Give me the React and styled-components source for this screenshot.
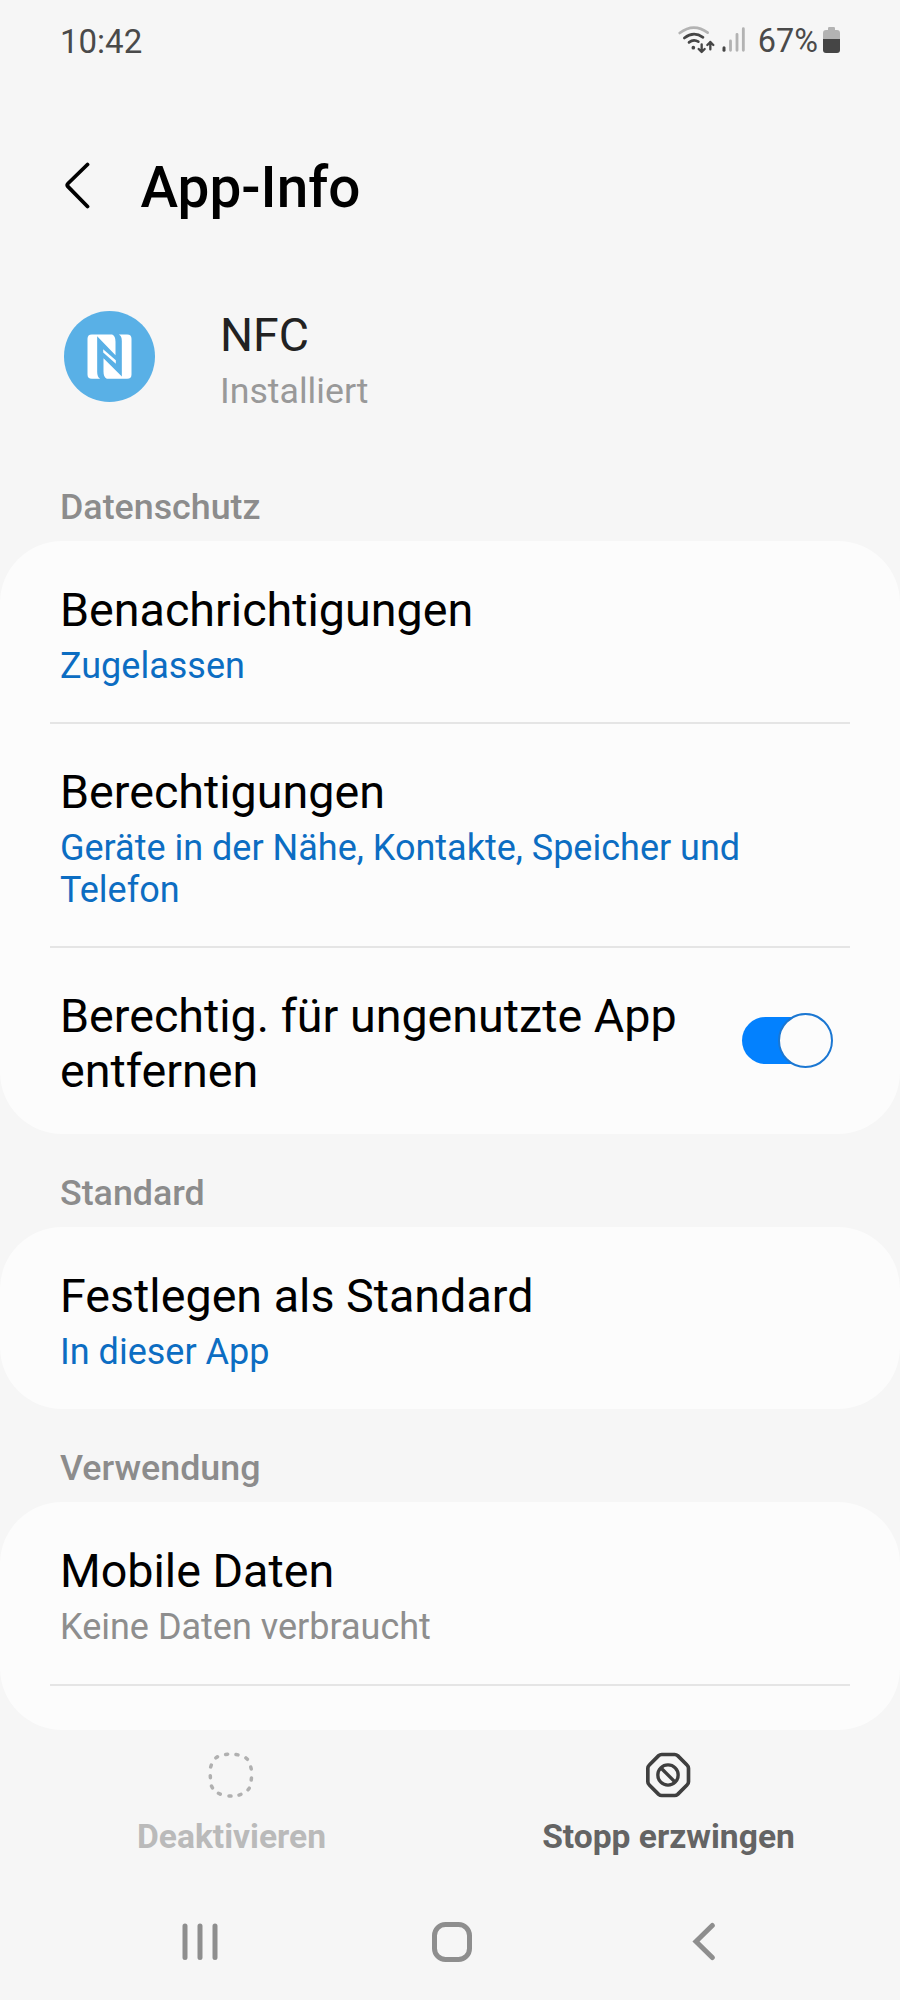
import React from "react";
import styled, { createGlobalStyle } from "styled-components";

const GlobalStyle = createGlobalStyle`
    * {
        box-sizing: border-box;
    }
    body {
        margin: 0;
        background: #f6f6f6;
        font-family: Roboto, "Liberation Sans", sans-serif;
    }
`;

const Screen = styled.div`
    width: 900px;
    height: 2000px;
    overflow: hidden;
    display: flex;
    flex-direction: column;
    background: #f6f6f6;
`;

const StatusBar = styled.div`
    height: 60px;
    padding: 22px 60px 0;
    display: flex;
    justify-content: space-between;
    align-items: flex-start;
    color: #4a4a4a;
    line-height: 38px;
`;

const Clock = styled.span`
    margin-top: 1px;
    font-size: 33px;
`;

const StatusIcons = styled.div`
    height: 36px;
    display: flex;
    align-items: center;
`;

const NetworkIcon = styled.svg`
    width: 80px;
    height: 50px;
    margin-right: 3px;
`;

const Percent = styled.span`
    padding-top: 2px;
    font-size: 32.4px;
    margin-right: 5px;
`;

const BatteryIcon = styled.svg`
    width: 17px;
    height: 26px;
`;

const Header = styled.header`
    padding: 94px 60px 0;
    display: flex;
    align-items: flex-start;
    gap: 50.5px;
`;

const BackIcon = styled.svg`
    width: 30px;
    height: 50px;
    margin-top: 6.5px;
`;

const Title = styled.h1`
    margin: 0;
    font-size: 56.7px;
    line-height: 67px;
    font-weight: 500;
    color: #000;
`;

const AppSummary = styled.div`
    height: 104px;
    margin-top: 86px;
    padding-left: 64px;
    display: flex;
    gap: 65px;
`;

const AppIcon = styled.svg`
    width: 91px;
    height: 91px;
    margin-top: 4px;
`;

const AppName = styled.div`
    margin-top: 1px;
    font-size: 46.4px;
    line-height: 55px;
    color: #222;
`;

const AppState = styled.div`
    margin-top: 6.5px;
    font-size: 35.7px;
    line-height: 42px;
    color: #999;
`;

const Sections = styled.main`
    height: 1318.5px;
    padding-top: 36.5px;
    flex: none;
`;

const SectionTitle = styled.h2`
    margin: 0;
    padding: 38px 60px 13.5px;
    font-size: 35.8px;
    line-height: 42px;
    font-weight: 500;
    color: #8c8c8c;
`;

const Card = styled.section`
    height: ${props => props.$height || "auto"};
    overflow: hidden;
    border-radius: 62px;
    background: #fcfcfc;
`;

const Row = styled.div`
    margin: 0 50px;
    padding: 40.4px 17.5px 35.4px 10px;
    display: flex;
    justify-content: space-between;
    align-items: center;
    &:first-child {
        padding-top: 42px;
    }
    &:not(:first-child) {
        border-top: 2px solid #e5e5e5;
    }
`;

const RowText = styled.div`
    max-width: ${props => props.$narrow ? "640px" : "730px"};
`;

const RowTitle = styled.div`
    font-size: 46.65px;
    line-height: 55px;
    color: #000;
`;

const RowValue = styled.div`
    margin-top: 7px;
    font-size: 36px;
    line-height: 42px;
    color: ${props => props.$muted ? "#8e8e8e" : "#0c6dc2"};
`;

const Switch = styled.div`
    width: 90.5px;
    height: 55px;
    margin-bottom: 6px;
    display: flex;
    align-items: center;
`;

const Track = styled.div`
    flex: none;
    width: 86px;
    height: 47px;
    border-radius: 24px;
    background: #0381fe;
`;

const Knob = styled.div`
    flex: none;
    width: 55px;
    height: 55px;
    margin-left: -50.5px;
    border: 2px solid #1b77d2;
    border-radius: 50%;
    background: #fcfcfc;
`;

const Actions = styled.div`
    padding: 22.5px 13px 0;
    display: grid;
    grid-template-columns: 1fr 1fr;
`;

const Action = styled.div`
    display: flex;
    flex-direction: column;
    align-items: center;
    gap: 19px;
    font-size: 33.6px;
    line-height: 40px;
    font-weight: 700;
    color: ${props => props.$disabled ? "#bababa" : "#646464"};
`;

const ActionIcon = styled.svg`
    width: 46px;
    height: 46px;
    margin-right: 1px;
`;

const NavBar = styled.nav`
    margin: 65px 0 0 74px;
    display: grid;
    grid-template-columns: repeat(3, 252px);
    justify-items: center;
`;

const NavIcon = styled.svg`
    width: 40px;
    height: 40px;
    fill: none;
    stroke: #8e8e8e;
    stroke-width: 5;
`;

const DOTS = [
    [380, 72], [411, 73], [440, 85], [453, 113], [454, 146], [446, 176], [420, 193],
    [390, 197], [358, 190], [336, 170], [331, 139], [333, 107], [350, 81]
];

// short dash at every dot, turned along the line between its neighbours
const dash = ([x, y], i) => {
    const [ax, ay] = DOTS[(i + DOTS.length - 1) % DOTS.length];
    const [bx, by] = DOTS[(i + 1) % DOTS.length];
    const len = Math.hypot(bx - ax, by - ay);
    const dx = (bx - ax) / len * 3;
    const dy = (by - ay) / len * 3;
    return `M${x - dx} ${y - dy}L${x + dx} ${y + dy}`;
};

const Network = () => (
    <NetworkIcon viewBox="0 0 240 150" fill="none" strokeLinecap="round" strokeLinejoin="round">
        <path d="M14 54Q56 22 98 53" stroke="#b3b3b3" strokeWidth="8"/>
        <g stroke="#454545" strokeWidth="8">
            <path d="M28 69Q56 47 84 67"/>
            <path d="M42 82Q56 71 70 80"/>
            <path d="M80 88V110M71 102L80 111L89 102" strokeWidth="7"/>
            <path d="M106 103V81M97 90L106 81L115 90" strokeWidth="7"/>
            <path d="M147 98V106" strokeWidth="9"/>
        </g>
        <circle cx="55" cy="98" r="5.5" fill="#454545"/>
        <path d="M166.5 78V106M186 58V106M205 41V106" stroke="#b3b3b3" strokeWidth="8.5"/>
    </NetworkIcon>
);

const Battery = () => (
    <BatteryIcon viewBox="0 0 17 26">
        <path d="M5 3V1.200Q5 0 6.200 0H10.800Q12 0 12 1.200V3H14Q17 3 17 6V12H0V6Q0 3 3 3Z" fill="#b3b3b3"/>
        <path d="M0 12H17V23Q17 26 14 26H3Q0 26 0 23Z" fill="#454545"/>
    </BatteryIcon>
);

const NfcLogo = () => (
    <AppIcon viewBox="73.500 63.500 273 273">
        <circle cx="210" cy="200" r="136.500" fill="#59b0e6"/>
        <g fill="#fff">
            <path d="M157 134H218Q228 138 228 156V196L173 139V246Q173 262 182 267H157Q144 267 144 254V147Q144 134 157 134Z"/>
            <path d="M263 267H202Q192 263 192 245V205L247 260V154Q247 138 238 134H263Q276 134 276 147V254Q276 267 263 267Z"/>
            <path d="M191 178L229 211V222L191 188Z"/>
        </g>
    </AppIcon>
);

const Toggle = () => (
    <Switch>
        <Track/>
        <Knob/>
    </Switch>
);

const Entry = ({title, value, muted, toggle}) => (
    <Row>
        <RowText $narrow={toggle}>
            <RowTitle>{title}</RowTitle>
            {value && <RowValue $muted={muted}>{value}</RowValue>}
        </RowText>
        {toggle && <Toggle/>}
    </Row>
);

const App = () => (
    <Screen>
        <GlobalStyle/>
        <StatusBar>
            <Clock>10:42</Clock>
            <StatusIcons>
                <Network/>
                <Percent>67%</Percent>
                <Battery/>
            </StatusIcons>
        </StatusBar>
        <Header>
            <BackIcon viewBox="0 0 30 50" fill="none" stroke="#000" strokeWidth="3.800" strokeLinecap="round" strokeLinejoin="round">
                <path d="M27.500 3.500L8 22.500Q6.500 24 8 25.700L27.500 45.500"/>
            </BackIcon>
            <Title>App-Info</Title>
        </Header>
        <AppSummary>
            <NfcLogo/>
            <div>
                <AppName>NFC</AppName>
                <AppState>Installiert</AppState>
            </div>
        </AppSummary>
        <Sections>
            <SectionTitle>Datenschutz</SectionTitle>
            <Card>
                <Entry title="Benachrichtigungen" value="Zugelassen"/>
                <Entry title="Berechtigungen" value="Geräte in der Nähe, Kontakte, Speicher und Telefon"/>
                <Entry title="Berechtig. für ungenutzte App entfernen" toggle/>
            </Card>
            <SectionTitle>Standard</SectionTitle>
            <Card>
                <Entry title="Festlegen als Standard" value="In dieser App"/>
            </Card>
            <SectionTitle>Verwendung</SectionTitle>
            <Card $height="227.5px">
                <Entry title="Mobile Daten" value="Keine Daten verbraucht" muted/>
                <Row/>
            </Card>
        </Sections>
        <Actions>
            <Action $disabled>
                <ActionIcon viewBox="324 65 138 138" fill="none" stroke="#b0b0b0" strokeWidth="10.500" strokeLinecap="round">
                    <path d={DOTS.map(dash).join("")}/>
                </ActionIcon>
                Deaktivieren
            </Action>
            <Action>
                <ActionIcon viewBox="376 156 138 138" fill="none" stroke="#3f3f3f" strokeWidth="11" strokeLinejoin="round">
                    <path d="M426 163.500H465Q470 163.500 474 167L502 195Q506.500 199 506.500 205V245Q506.500 251 502 255L474 283Q470 286.500 465 286.500H426Q421 286.500 417 283L389 255Q384.500 251 384.500 245V205Q384.500 199 389 195L417 167Q421 163.500 426 163.500Z"/>
                    <circle cx="445" cy="225" r="30.500" strokeWidth="10"/>
                    <path d="M424 204L466 246" strokeWidth="10"/>
                </ActionIcon>
                Stopp erzwingen
            </Action>
        </Actions>
        <NavBar>
            <NavIcon viewBox="0 0 40 40" strokeLinecap="round">
                <path d="M5 4V35.500M20 4V35.500M35 4V35.500"/>
            </NavIcon>
            <NavIcon viewBox="0 0 40 40">
                <rect x="2.500" y="2.500" width="35" height="35" rx="11"/>
            </NavIcon>
            <NavIcon viewBox="0 0 40 40" strokeLinecap="round">
                <path d="M28.300 3.500L12 19.500L28.300 35.500"/>
            </NavIcon>
        </NavBar>
    </Screen>
);

export default App;
